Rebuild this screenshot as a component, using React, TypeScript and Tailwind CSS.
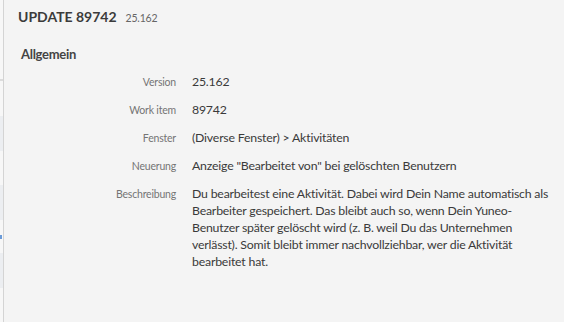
import React from 'react';

const rows = [
  { label: 'Version', value: '25.162' },
  { label: 'Work item', value: '89742' },
  { label: 'Fenster', value: '(Diverse Fenster) > Aktivitäten' },
  { label: 'Neuerung', value: 'Anzeige "Bearbeitet von" bei gelöschten Benutzern' },
  {
    label: 'Beschreibung',
    value:
      'Du bearbeitest eine Aktivität. Dabei wird Dein Name automatisch als Bearbeiter gespeichert. Das bleibt auch so, wenn Dein Yuneo-Benutzer später gelöscht wird (z. B. weil Du das Unternehmen verlässt). Somit bleibt immer nachvollziehbar, wer die Aktivität bearbeitet hat.',
  },
];

export default function App() {
  return (
    <div className="flex h-[322px] w-[564px] overflow-hidden bg-[#f4f4f4] font-['Lato','Noto_Sans',sans-serif]">
      {/* sliver of the list behind */}
      <div className="flex w-[3px] flex-col bg-[#f7f7f7]">
        <div className="h-[79px]" />
        <div className="h-[2px] bg-[#dcdcdc]" />
        <div className="h-[35px]" />
        <div className="h-[35px] bg-[#eceef1]" />
        <div className="h-[34px]" />
        <div className="h-[35px] bg-[#eceef1]" />
        <div className="flex h-[33px] items-center">
          <div className="h-[4px] w-[2px] bg-[#6b9bd8]" />
        </div>
        <div className="h-[35px] bg-[#eceef1]" />
      </div>
      <div className="flex-1 border-l border-[#d4d4d4]">
        <div className="flex items-baseline gap-[9px] pl-[14px] pt-[6px]">
          <span className="text-[14px] font-bold text-[#3b3b3b]">UPDATE 89742</span>
          <span className="text-[10.5px] tracking-[-0.2px] text-[#666]">25.162</span>
        </div>
        <div className="pl-[17px] pt-[18px] text-[13px] font-bold tracking-[-0.3px] text-[#444]">Allgemein</div>
        <div className="mt-[8px] grid grid-cols-[172px_364px] items-baseline gap-x-[16px] gap-y-[10px]">
          {rows.map((r) => (
            <React.Fragment key={r.label}>
              <div className="text-right text-[10.5px] leading-[17px] tracking-[-0.2px] text-[#757575]">{r.label}</div>
              <div className="text-[12.3px] leading-[17px] tracking-[-0.2px] text-[#3a3a3a]">{r.value}</div>
            </React.Fragment>
          ))}
        </div>
      </div>
    </div>
  );
}
